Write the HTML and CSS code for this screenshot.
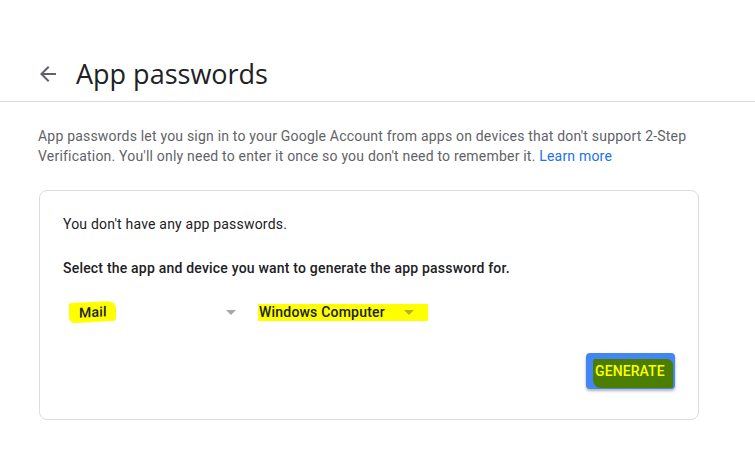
FILE: index.html
```html
<!DOCTYPE html>
<html lang="en">
<head>
<meta charset="utf-8">
<title>App passwords</title>
<link rel="stylesheet" href="styles.css">
</head>
<body>
<header class="topbar">
  <svg class="back" width="24" height="24" viewBox="0 0 24 24" aria-hidden="true">
    <path d="M20 11H7.83l5.59-5.59L12 4l-8 8 8 8 1.41-1.41L7.83 13H20v-2z" fill="#5f6368"/>
  </svg>
  <h1 class="title">App passwords</h1>
</header>
<main class="content">
  <p class="intro">App passwords let you sign in to your Google Account from apps on devices that don't support 2-Step Verification. You'll only need to enter it once so you don't need to remember it. <a class="link" href="#">Learn more</a></p>
  <section class="card">
    <p class="empty">You don't have any app passwords.</p>
    <p class="prompt">Select the app and device you want to generate the app password for.</p>
    <div class="selects">
      <div class="select select-app">
        <span class="mark mark-app">Mail</span>
        <span class="caret"></span>
      </div>
      <div class="select select-device">
        <span class="value">Windows Computer</span>
        <span class="caret caret-hl"></span>
      </div>
    </div>
    <div class="actions">
      <button class="btn" type="button"><span class="btn-mark">GENERATE</span></button>
    </div>
  </section>
</main>
</body>
</html>
```
FILE: styles.css
```css
* { box-sizing: border-box; }
html, body { margin: 0; padding: 0; background: #fff; }
body {
  font-family: Roboto, "Liberation Sans", Arial, sans-serif;
  color: #202124;
  width: 755px;
  height: 449px;
  overflow: hidden;
  letter-spacing: 0.2px;
}
.topbar {
  display: flex;
  align-items: center;
  height: 102px;
  padding: 46px 0 0 36px;
  border-bottom: 1px solid #dadce0;
}
.back { display: block; flex: none; }
.title {
  margin: 0 0 0 16px;
  font-family: "Open Sans", Roboto, sans-serif;
  font-weight: 400;
  font-size: 27px;
  letter-spacing: 0;
  color: #202124;
  line-height: 34px;
}
.content {
  padding: 24px 0 0 38px;
}
.intro {
  margin: 0;
  width: 665px;
  font-size: 14px;
  line-height: 20px;
  color: #5f6368;
}
.link { color: #1a73e8; text-decoration: none; }
.card {
  margin-top: 24px;
  margin-left: 1px;
  width: 660px;
  height: 230px;
  border: 1px solid #dadce0;
  border-radius: 8px;
  padding: 23px 23px 0 23px;
}
.empty {
  margin: 0;
  font-size: 14px;
  line-height: 20px;
  color: #202124;
}
.prompt {
  margin: 24px 0 0 0;
  font-size: 14px;
  line-height: 20px;
  font-weight: 500;
  color: #202124;
}
.selects {
  display: flex;
  gap: 18px;
  margin-top: 22px;
  height: 24px;
  align-items: center;
}
.select {
  display: flex;
  align-items: center;
  justify-content: space-between;
  font-size: 14px;
  font-weight: 500;
  color: #202124;
}
.select-app { width: 177px; padding-right: 4px; }
.mark-app {
  background: #ffff00;
  padding: 2px 9px 2px 10px;
  margin-left: 6px;
  border-radius: 2px 8px 3px 6px;
  transform: skewY(-3deg);
  line-height: 16px;
}
.select-device {
  width: 170px;
  background: #ffff00;
  height: 17px;
  padding: 0 14px 0 1px;
}
.caret {
  width: 0;
  height: 0;
  border-left: 5px solid transparent;
  border-right: 5px solid transparent;
  border-top: 5px solid #a8a8a8;
}
.caret-hl { border-top-color: #b3b32a; }
.actions {
  display: flex;
  justify-content: flex-end;
  margin-top: 29px;
  padding-right: 0;
}
.btn {
  width: 89px;
  height: 36px;
  border: none;
  border-radius: 4px;
  background: #4285f4;
  box-shadow: 0 2px 3px rgba(0,0,0,0.3);
  padding: 6px 2px 1px 7px;
  display: flex;
  align-items: stretch;
  font-family: Roboto, sans-serif;
  font-size: 14px;
  font-weight: 500;
  cursor: pointer;
}
.btn-mark {
  flex: 1;
  background: #4a7d00;
  color: #ffff00;
  display: flex;
  align-items: center;
  padding: 0 0 6px 2px;
  border-radius: 2px 6px 2px 8px;
  letter-spacing: 0.1px;
}
```
